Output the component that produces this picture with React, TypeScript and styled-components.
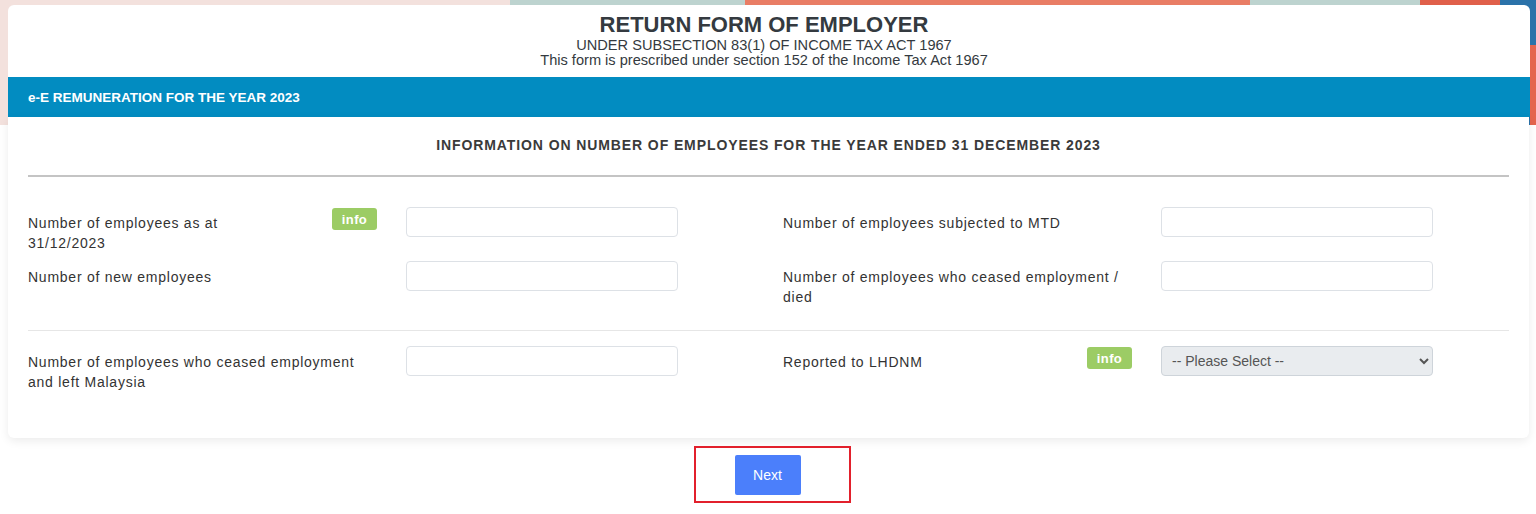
import styled, { createGlobalStyle } from 'styled-components'

const GlobalStyle = createGlobalStyle`
  html, body {
    margin: 0;
    padding: 0;
    background: #fff;
  }
  body {
    font-family: 'Liberation Sans', Arial, sans-serif;
    color: #333;
  }
  * {
    box-sizing: border-box;
  }
`

// decorative banner behind the top of the form
const Page = styled.div`
  min-height: 514px;
  padding: 5px 6px 0 8px;
  background:
    linear-gradient(to bottom, #2b72a9 0 45px, #e4654e 45px 125px) right top / 6px 125px no-repeat,
    linear-gradient(
        to right,
        #f3e1dd 0 510px,
        #bdd3cf 510px 745px,
        #e97d65 745px 1250px,
        #bdd3cf 1250px 1420px,
        #e0604a 1420px 1500px,
        #2b72a9 1500px
      )
      left top / 100% 125px no-repeat,
    #fff;
`

const HeaderCard = styled.header`
  background: #fff;
  border-radius: 6px 6px 0 0;
  overflow: hidden;
`

const TitleBlock = styled.div`
  height: 72px;
  padding: 7px 10px 0 0;
  text-align: center;
  color: #343a40;
`

const Title = styled.h1`
  margin: 0;
  font-size: 22px;
  line-height: 26px;
  font-weight: bold;
`

const SubTitle = styled.div`
  font-size: 14.6px;
  line-height: 15px;
`

const Band = styled.div`
  height: 40px;
  display: flex;
  align-items: center;
  padding-left: 20px;
  background: #028cc1;
  color: #fff;
  font-size: 13.5px;
  font-weight: bold;
`

const BodyCard = styled.section`
  background: #fff;
  border-radius: 0 0 6px 6px;
  box-shadow: 0 3px 10px rgba(0, 0, 0, 0.08);
  padding: 20px 20px 38px;
  margin-right: 1px;
`

const SectionHeading = styled.h2`
  margin: 0;
  text-align: center;
  font-size: 14px;
  line-height: 17px;
  font-weight: bold;
  color: #3a3a3a;
  letter-spacing: 0.9px;
`

const Rule = styled.hr<{ $strong?: boolean }>`
  border: 0;
  margin: ${(p) => (p.$strong ? '21px 0 30px' : '23px 0 15px')};
  height: ${(p) => (p.$strong ? '2px' : '1px')};
  background: ${(p) => (p.$strong ? '#c4c4c4' : '#e6e6e6')};
`

const FormRow = styled.div`
  display: grid;
  grid-template-columns: 1fr 1fr;
  column-gap: 29px;
  margin-bottom: 8px;
`

const Field = styled.div`
  display: grid;
  grid-template-columns: 350px 272px;
  column-gap: 28px;
  align-items: start;
`

const LabelCell = styled.div`
  display: flex;
  justify-content: space-between;
  align-items: flex-start;
`

const LabelText = styled.label<{ $narrow?: boolean }>`
  display: block;
  max-width: ${(p) => (p.$narrow ? '250px' : '340px')};
  padding-top: 6px;
  font-size: 14px;
  line-height: 20px;
  letter-spacing: 0.75px;
  color: #333;
`

const InfoBadge = styled.span`
  margin-top: 1px;
  margin-right: 1px;
  width: 45px;
  height: 22px;
  display: inline-flex;
  align-items: center;
  justify-content: center;
  background: #9ccc65;
  border-radius: 3px;
  color: #fff;
  font-size: 13px;
  font-weight: bold;
  letter-spacing: 0.4px;
`

const TextInput = styled.input`
  width: 272px;
  height: 30px;
  border: 1px solid #dde1e6;
  border-radius: 4px;
  background: #fff;
  padding: 0 10px;
  font-size: 14px;
  font-family: inherit;
`

const SelectInput = styled.select`
  width: 272px;
  height: 30px;
  border: 1px solid #ced4da;
  border-radius: 4px;
  background-color: #e9ecef;
  padding: 0 6px;
  font-size: 14px;
  font-family: inherit;
  color: #555;
`

const Actions = styled.div`
  display: flex;
  justify-content: center;
  padding-top: 8px;
  padding-left: 6px;
`

// red highlight frame drawn around the button in the screenshot
const Highlight = styled.div`
  width: 157px;
  height: 57px;
  border: 2px solid #e2202c;
  display: flex;
  align-items: center;
  padding-left: 39px;
`

const NextButton = styled.button`
  width: 66px;
  height: 40px;
  border: 0;
  border-radius: 2px;
  background: #4b7ffb;
  color: #fff;
  font-size: 14px;
  font-family: inherit;
  margin-top: 1px;
`

type FieldProps = {
  label: string
  info?: boolean
  select?: boolean
}

const FormField = ({ label, info, select }: FieldProps) => (
  <Field>
    <LabelCell>
      <LabelText $narrow={info}>{label}</LabelText>
      {info && <InfoBadge>info</InfoBadge>}
    </LabelCell>
    {select ? (
      <SelectInput defaultValue="">
        <option value="">-- Please Select --</option>
        <option value="Y">Yes</option>
        <option value="N">No</option>
      </SelectInput>
    ) : (
      <TextInput type="text" />
    )}
  </Field>
)

export default function App() {
  return (
    <>
      <GlobalStyle />
      <Page>
        <HeaderCard>
          <TitleBlock>
            <Title>RETURN FORM OF EMPLOYER</Title>
            <SubTitle>UNDER SUBSECTION 83(1) OF INCOME TAX ACT 1967</SubTitle>
            <SubTitle>This form is prescribed under section 152 of the Income Tax Act 1967</SubTitle>
          </TitleBlock>
          <Band>e-E REMUNERATION FOR THE YEAR 2023</Band>
        </HeaderCard>
        <BodyCard>
          <SectionHeading>
            INFORMATION ON NUMBER OF EMPLOYEES FOR THE YEAR ENDED 31 DECEMBER 2023
          </SectionHeading>
          <Rule $strong />
          <FormRow>
            <FormField label="Number of employees as at 31/12/2023" info />
            <FormField label="Number of employees subjected to MTD" />
          </FormRow>
          <FormRow>
            <FormField label="Number of new employees" />
            <FormField label="Number of employees who ceased employment / died" />
          </FormRow>
          <Rule />
          <FormRow>
            <FormField label="Number of employees who ceased employment and left Malaysia" />
            <FormField label="Reported to LHDNM" info select />
          </FormRow>
        </BodyCard>
        <Actions>
          <Highlight>
            <NextButton type="button">Next</NextButton>
          </Highlight>
        </Actions>
      </Page>
    </>
  )
}
